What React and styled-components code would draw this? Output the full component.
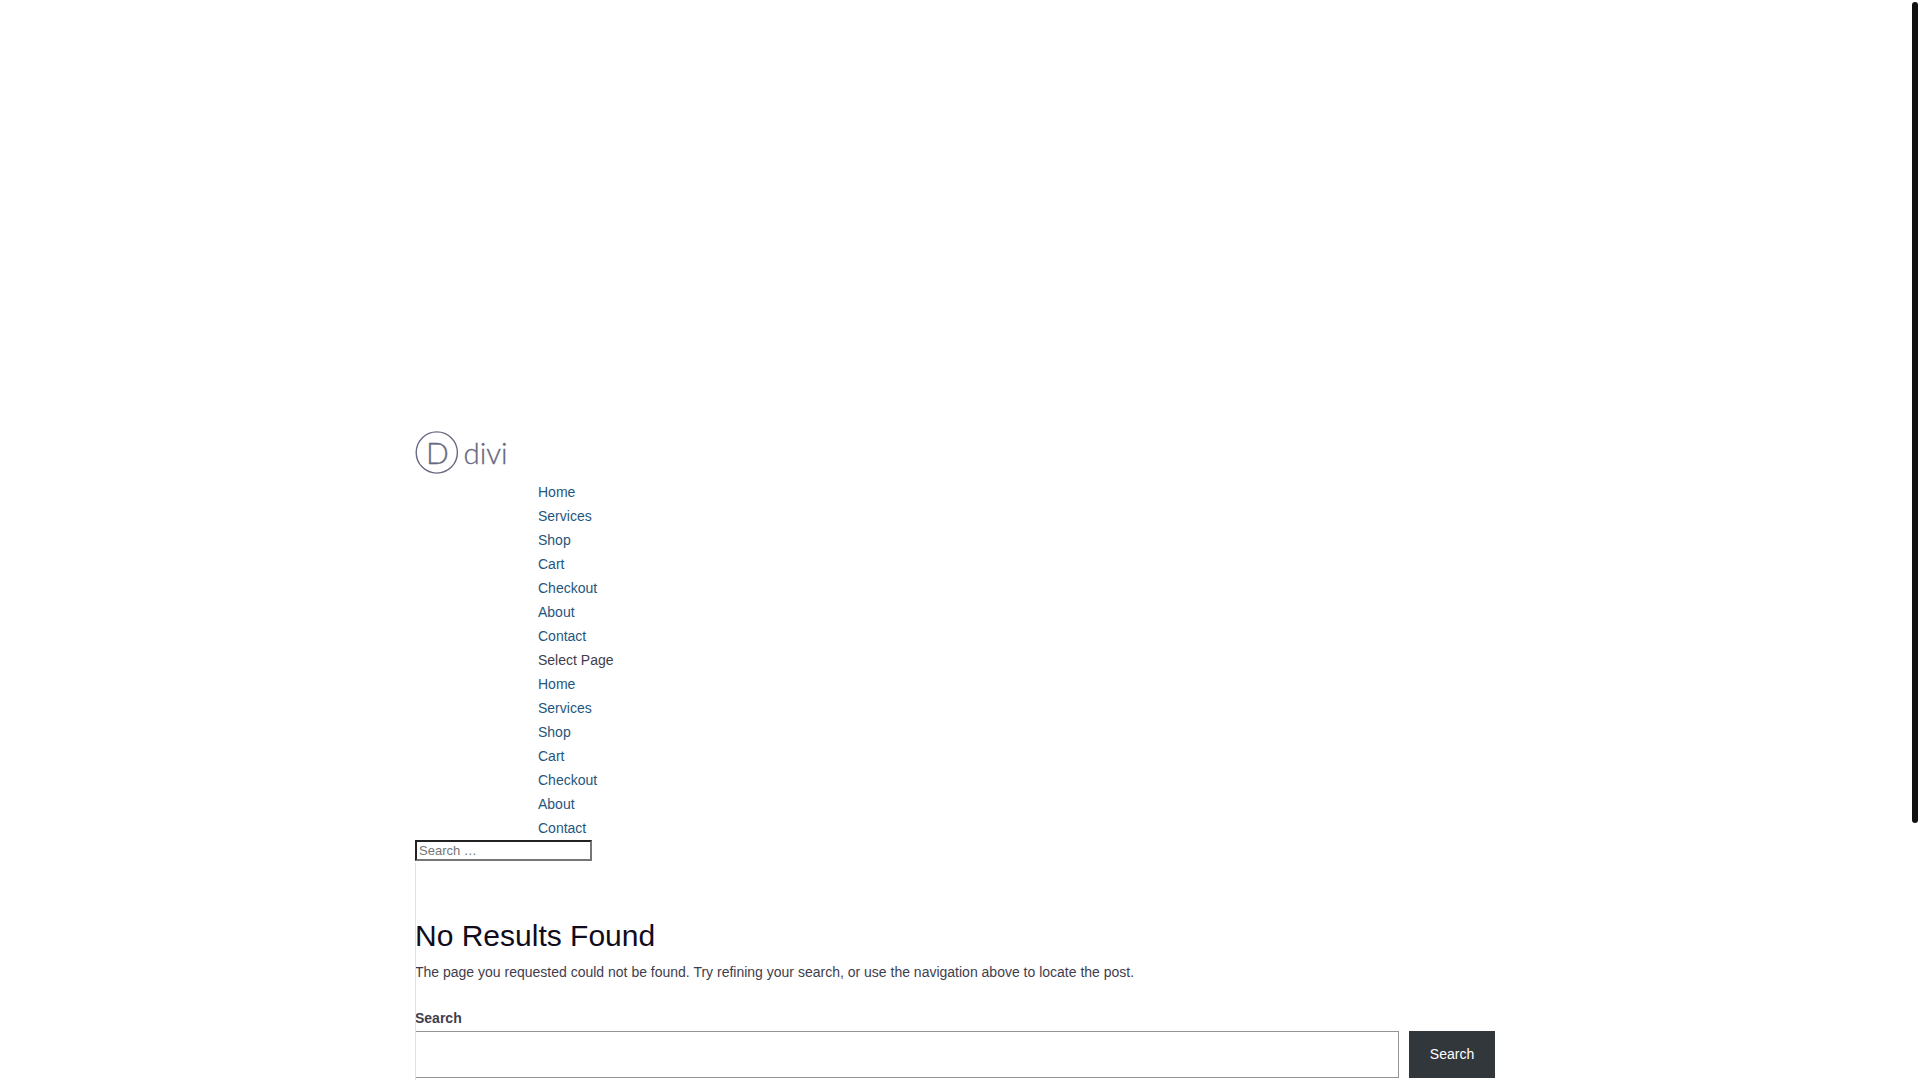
import styled, { createGlobalStyle } from "styled-components";

const menuItems = [
  "Home",
  "Services",
  "Shop",
  "Cart",
  "Checkout",
  "About",
  "Contact",
];

function Logo() {
  return (
    <LogoLink href="#home" aria-label="divi">
      <LogoSvg viewBox="0 0 94 46">
        <circle cx="21.8" cy="22.5" r="20.6" />
        <text x="11" y="33.8" fontSize="30">
          D
        </text>
        <text x="48.4" y="33.8" fontSize="29.5">
          divi
        </text>
      </LogoSvg>
    </LogoLink>
  );
}

function Menu() {
  return (
    <MenuList>
      {menuItems.map((item) => (
        <li key={item}>
          <MenuLink href={`#${item.toLowerCase()}`}>{item}</MenuLink>
        </li>
      ))}
    </MenuList>
  );
}

function Header() {
  return (
    <StyledHeader>
      <Logo />
      <Nav>
        <Menu />
        <SelectPage>Select Page</SelectPage>
        <Menu />
      </Nav>
      <form role="search" onSubmit={(e) => e.preventDefault()}>
        <HeaderInput
          type="search"
          placeholder="Search …"
          aria-label="Search for:"
        />
      </form>
    </StyledHeader>
  );
}

function NotFound() {
  return (
    <Main>
      <Title>No Results Found</Title>
      <Text>
        The page you requested could not be found. Try refining your search, or
        use the navigation above to locate the post.
      </Text>
      <form role="search" onSubmit={(e) => e.preventDefault()}>
        <SearchLabel htmlFor="search">Search</SearchLabel>
        <SearchRow>
          <SearchInput type="search" id="search" />
          <SearchButton type="submit">Search</SearchButton>
        </SearchRow>
      </form>
    </Main>
  );
}

export default function App() {
  return (
    <>
      <GlobalStyle />
      <Page>
        <Header />
        <NotFound />
      </Page>
      <ScrollThumb />
    </>
  );
}

const GlobalStyle = createGlobalStyle`
  * {
    box-sizing: border-box;
  }

  body {
    margin: 0;
    padding-right: 10px;
    background-color: white;
    color: #3f3d4d;
    font-family: Arial, "Liberation Sans", sans-serif;
    font-size: 14px;
    line-height: 24px;
    -webkit-font-smoothing: antialiased;
  }
`;

const Page = styled.div`
  display: flex;
  flex-direction: column;
  width: 80%;
  max-width: 1080px;
  min-height: 100vh;
  margin: 0 auto;
`;

const StyledHeader = styled.header`
  display: flex;
  flex-direction: column;
  align-items: flex-start;
  padding-top: 430px;
`;

const LogoLink = styled.a`
  display: block;
  height: 50px;
`;

const LogoSvg = styled.svg`
  display: block;
  width: 94px;
  height: 46px;

  circle {
    fill: none;
    stroke: #666980;
    stroke-width: 1.4;
  }

  text {
    fill: #666980;
    stroke: #666980;
    stroke-width: 0.3;
    font-family: Lato, sans-serif;
    font-weight: 300;
  }
`;

const Nav = styled.nav`
  margin-left: 123px;
`;

const MenuList = styled.ul`
  margin: 0;
  padding: 0;
  list-style: none;
`;

const MenuLink = styled.a`
  color: #1f567d;
  text-decoration: none;
`;

const SelectPage = styled.span`
  display: block;
`;

const HeaderInput = styled.input`
  display: block;
  width: 177px;
  height: 21px;
  padding: 1px 2px;
  border: 2px solid;
  border-color: #222 #767676 #767676 #222;
  background-color: white;
  font-family: inherit;
  font-size: 13px;

  &::placeholder {
    color: #757575;
  }
`;

const Main = styled.main`
  position: relative;
  flex: 1;
  margin-top: 2px;
  padding: 58px 0 2px;

  &::before {
    content: "";
    position: absolute;
    top: 0;
    bottom: 0;
    left: 0;
    width: 1px;
    background-color: #e2e2e2;
  }
`;

const Title = styled.h1`
  margin: 0 0 9px;
  color: #100c1c;
  font-size: 30px;
  font-weight: 400;
  line-height: 30px;
`;

const Text = styled.p`
  margin: 0 0 22px;
`;

const SearchLabel = styled.label`
  display: block;
  margin-bottom: 1px;
  font-weight: 700;
`;

const SearchRow = styled.div`
  display: flex;
  gap: 10px;
`;

const SearchInput = styled.input`
  flex: 1;
  min-width: 0;
  height: 47px;
  padding: 8px;
  border: 1px solid #949494;
  background-color: white;
  font-family: inherit;
  font-size: 14px;
`;

const SearchButton = styled.button`
  width: 86px;
  padding: 0 0 2px;
  border: none;
  background-color: #32373c;
  color: white;
  font-family: inherit;
  font-size: 14px;
  cursor: pointer;
`;

const ScrollThumb = styled.div`
  position: fixed;
  top: 2px;
  right: 2px;
  width: 6px;
  height: 76vh;
  border-radius: 3px;
  background-color: #111;
`;
